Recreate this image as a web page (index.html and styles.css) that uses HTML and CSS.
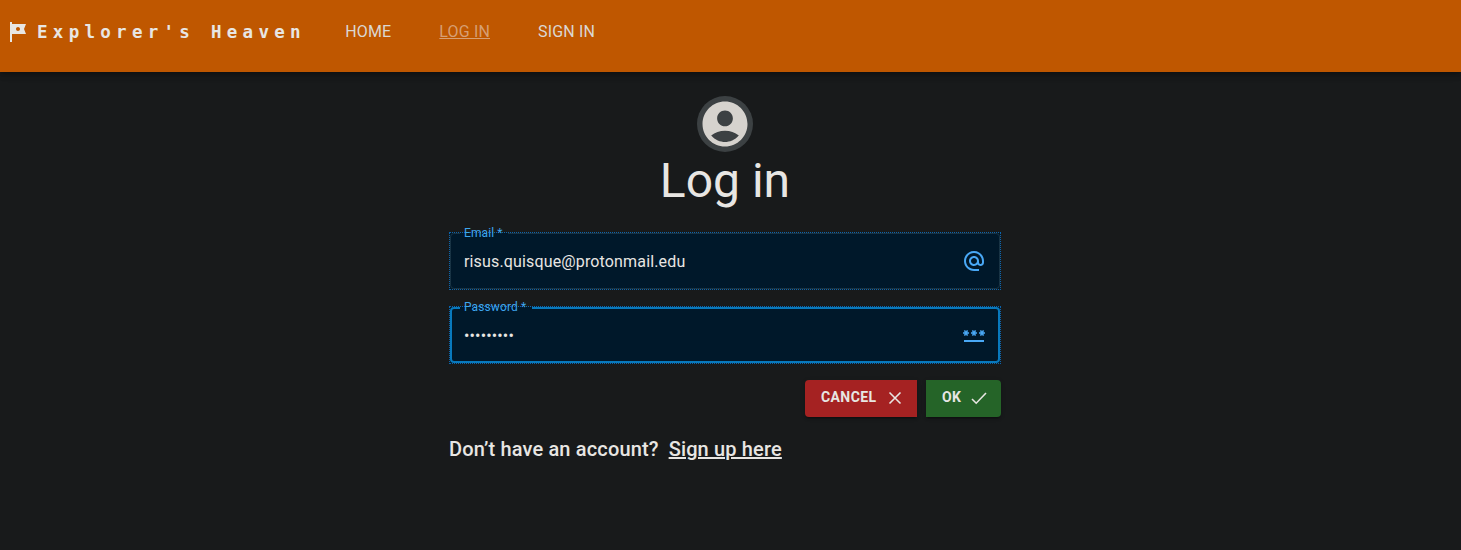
FILE: index.html
```html
<!DOCTYPE html>
<html lang="en">
<head>
<meta charset="utf-8">
<title>Explorer's Heaven</title>
<link rel="stylesheet" href="styles.css">
</head>
<body>
<header class="bar">
  <svg class="flag" viewBox="0 0 24 24"><path d="M21 4H7V2H5v20h2v-8h14l-2-5 2-5zm-6 5c0 1.1-.9 2-2 2s-2-.9-2-2 .9-2 2-2 2 .9 2 2z"/></svg>
  <span class="brand">Explorer's Heaven</span>
  <nav class="nav">
    <a>HOME</a>
    <a class="active">LOG IN</a>
    <a>SIGN IN</a>
  </nav>
</header>
<main class="page">
  <div class="avatar"><svg viewBox="0 0 24 24"><path d="M12 2C6.48 2 2 6.48 2 12s4.48 10 10 10 10-4.48 10-10S17.52 2 12 2zm0 4c1.93 0 3.5 1.57 3.5 3.5S13.93 13 12 13s-3.5-1.57-3.5-3.5S10.07 6 12 6zm0 14c-2.03 0-4.43-.82-6.14-2.88C7.55 15.8 9.68 15 12 15s4.45.8 6.14 2.12C16.43 19.18 14.03 20 12 20z"/></svg></div>
  <h1 class="title">Log in</h1>
  <form class="form">
    <div class="field">
      <fieldset class="outline"><legend>Email *</legend></fieldset>
      <label class="label">Email *</label>
      <span class="value">risus.quisque@protonmail.edu</span>
      <svg class="icon" viewBox="0 0 24 24"><path d="M12 1.95c-5.52 0-10 4.48-10 10s4.48 10 10 10h5v-2h-5c-4.34 0-8-3.66-8-8s3.66-8 8-8 8 3.66 8 8v1.43c0 .79-.71 1.57-1.5 1.57s-1.5-.78-1.5-1.57v-1.43c0-2.76-2.24-5-5-5s-5 2.24-5 5 2.24 5 5 5c1.38 0 2.64-.56 3.54-1.47.65.89 1.77 1.47 2.96 1.47 1.97 0 3.5-1.6 3.5-3.57v-1.43c0-5.52-4.48-10-10-10zm0 13c-1.66 0-3-1.34-3-3s1.34-3 3-3 3 1.34 3 3-1.34 3-3 3z"/></svg>
    </div>
    <div class="field focused">
      <fieldset class="outline"><legend>Password *</legend></fieldset>
      <label class="label">Password *</label>
      <span class="value">•••••••••</span>
      <svg class="icon" viewBox="0 0 24 24"><path d="M2 17h20v2H2v-2zm1.15-4.05L4 11.47l.85 1.48 1.3-.75-.85-1.48H7v-1.5H5.3l.85-1.47L4.85 7 4 8.47 3.15 7l-1.3.75.85 1.47H1v1.5h1.7l-.85 1.48 1.3.75zm6.7-.75 1.3.75.85-1.48.85 1.48 1.3-.75-.85-1.48H15v-1.5h-1.7l.85-1.47-1.3-.75L12 8.47 11.15 7l-1.3.75.85 1.47H9v1.5h1.7l-.85 1.48zM23 9.22h-1.7l.85-1.47-1.3-.75L20 8.47 19.15 7l-1.3.75.85 1.47H17v1.5h1.7l-.85 1.48 1.3.75.85-1.48.85 1.48 1.3-.75-.85-1.48H23v-1.5z"/></svg>
    </div>
    <div class="actions">
      <button type="button" class="btn cancel"><span>CANCEL</span><svg viewBox="0 0 20 20"><path d="M4.5 4.5l11 11M15.5 4.5l-11 11"/></svg></button>
      <button type="button" class="btn ok"><span>OK</span><svg viewBox="0 0 20 20"><path d="M3 11l4.2 4.2L17 5"/></svg></button>
    </div>
  </form>
  <p class="signup">Don’t have an account?<a>Sign up here</a></p>
</main>
</body>
</html>
```

FILE: styles.css
```css
* { box-sizing: border-box; }
body {
  margin: 0;
  min-height: 550px;
  background: #181a1b;
  color: #e8e6e3;
  font-family: Roboto, "Liberation Sans", sans-serif;
}
.bar {
  display: flex;
  align-items: center;
  height: 72px;
  padding: 0 5px 8px;
  background: #bf5700;
  box-shadow: 0 2px 4px -1px rgba(0,0,0,.2), 0 4px 5px rgba(0,0,0,.14), 0 1px 10px rgba(0,0,0,.12);
}
.flag { width: 24px; height: 24px; margin-right: 8px; fill: currentColor; }
.brand {
  font: bold 17.5px/24px "DejaVu Sans Mono", monospace;
  letter-spacing: 5.28px;
}
.nav {
  display: flex;
  gap: 48px;
  margin-left: 39.4px;
  font-size: 16px;
  line-height: 24px;
  letter-spacing: .15px;
  color: #dbd8d3;
}
.active { color: #d69f74; text-decoration: underline; }
.page {
  display: flex;
  flex-direction: column;
  align-items: center;
  padding: 24px 11px 0 0;
}
.avatar {
  display: grid;
  place-items: center;
  width: 56px;
  height: 56px;
  border-radius: 50%;
  background: #3c4143;
}
.avatar svg { width: 54px; height: 54px; fill: #d6d3ce; }
.title { margin: 1px 0 -1px; font-size: 48px; font-weight: 400; line-height: 56px; }
.form { display: flex; flex-direction: column; width: 552px; padding: 25px 1px 0; }
.field {
  position: relative;
  display: flex;
  align-items: center;
  justify-content: space-between;
  height: 56px;
  padding: 0 14px;
  margin-bottom: 18px;
  background: #00182a;
  outline: 1px dotted #0b65ad;
}
.outline {
  position: absolute;
  inset: -5px 0 0;
  margin: 0;
  padding: 0 9px;
  border: 1px solid #183344;
  border-radius: 4px;
}
.outline legend { height: 11px; padding: 0 5px 0 3px; font-size: 12px; line-height: 11px; letter-spacing: .3px; visibility: hidden; }
.label { position: absolute; top: -8px; left: 14px; font-size: 12px; line-height: 16px; letter-spacing: .11px; color: #3ea6ee; }
.focused .outline { padding: 0 8px; border: 2px solid #0879bd; }
.value { font-size: 16px; line-height: 23px; letter-spacing: .15px; }
.icon { width: 24px; height: 24px; fill: #49a8f5; }
.actions { display: flex; justify-content: flex-end; gap: 9px; margin: -1px -1px 0 0; }
.btn {
  display: flex;
  align-items: center;
  height: 37px;
  padding: 0 12px 2px 16px;
  border: 0;
  color: #e8e6e3;
  font: 700 14px/24px Roboto, sans-serif;
  letter-spacing: .4px;
  box-shadow: 0 3px 1px -2px rgba(0,0,0,.2), 0 2px 2px rgba(0,0,0,.14), 0 1px 5px rgba(0,0,0,.12);
}
.btn span { padding-bottom: 2px; }
.btn svg { width: 20px; height: 20px; margin-left: auto; fill: none; stroke: currentColor; stroke-width: 1.6; }
.cancel { width: 112px; background: #a52222; border-radius: 4px 0 0 4px; }
.ok { width: 75px; background: #256428; border-radius: 0 4px 4px 0; }
.signup {
  width: 552px;
  margin: 16px 0 0;
  font-size: 20px;
  font-weight: 500;
  line-height: 32px;
  letter-spacing: .15px;
}
.signup a { margin-left: 10px; text-decoration: underline; }
```
